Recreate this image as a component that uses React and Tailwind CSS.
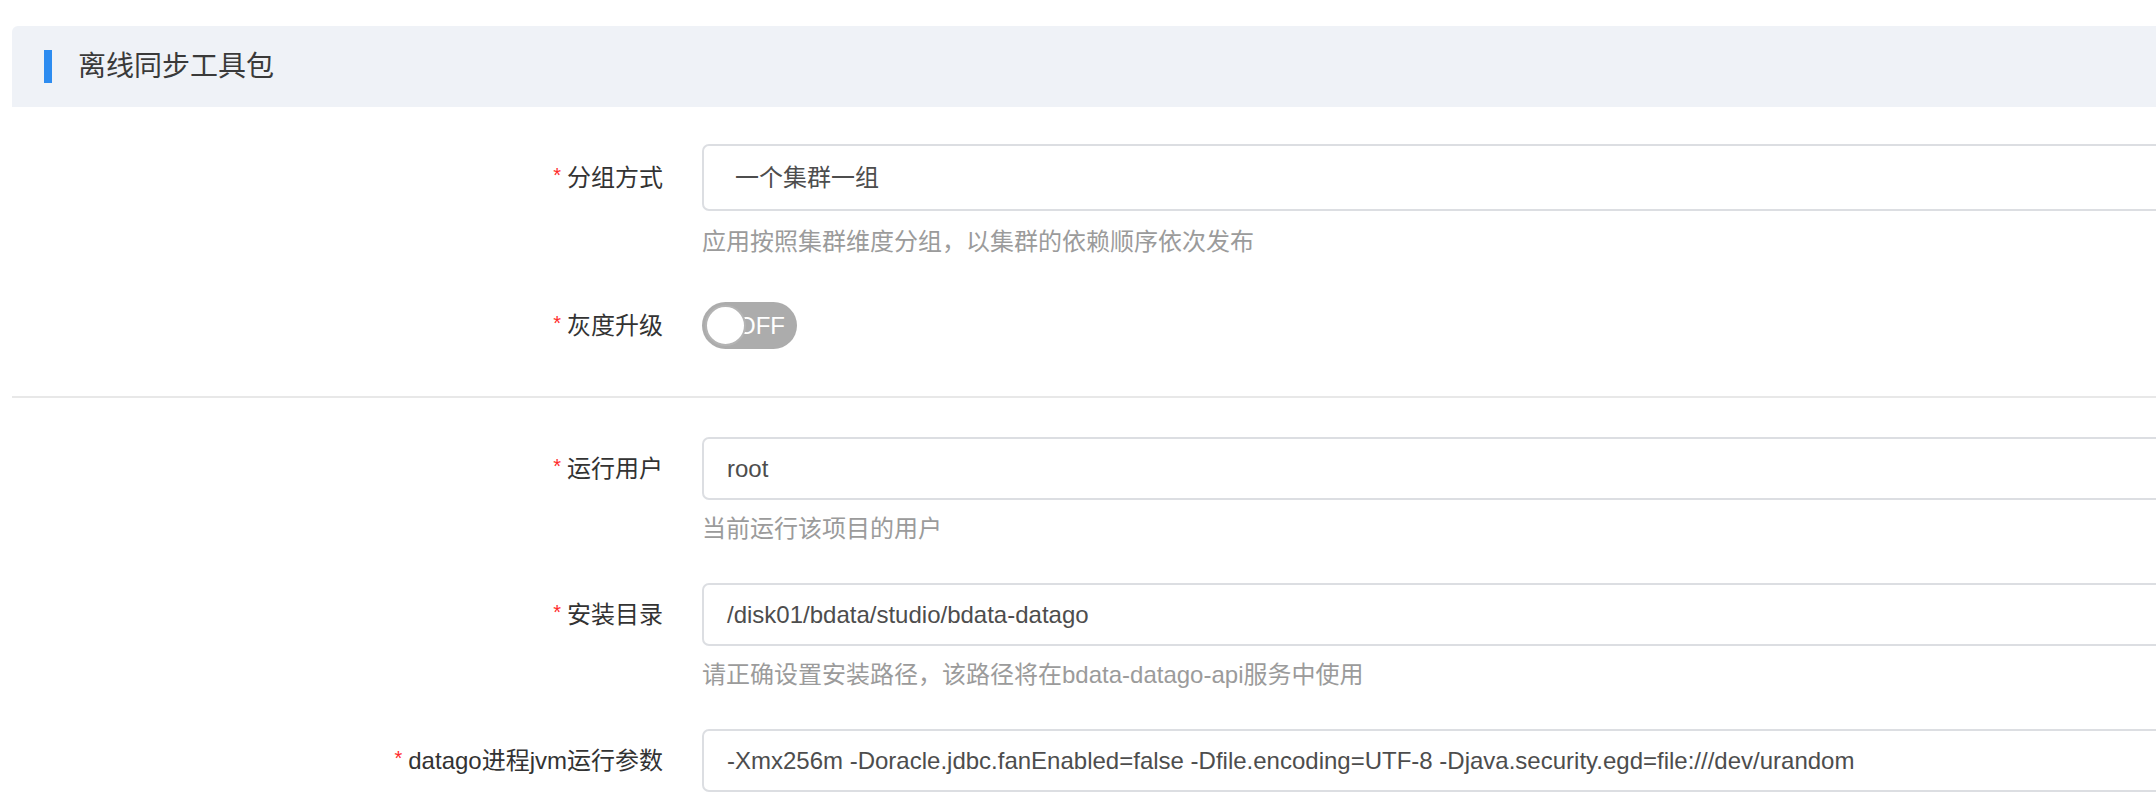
import React from "react";

const FONT = { fontFamily: '"Liberation Sans", "Noto Sans CJK SC", sans-serif' };

function Label({ text, h }) {
  return (
    <div className={`w-[690px] shrink-0 pr-[39px] flex items-center justify-end ${h}`}>
      <span className="text-[20px] leading-none text-[#ff2a2a] mr-[6px] -mt-[6px]">*</span>
      <span className="text-[24px] leading-none text-[#333333]">{text}</span>
    </div>
  );
}

function Help({ children, mt = "mt-[12px]" }) {
  return (
    <div className={`${mt} text-[24px] leading-[34px] text-[#9b9b9b] whitespace-nowrap`}>{children}</div>
  );
}

function TextInput({ value, h = "h-[63px]", pl = "pl-[23px]" }) {
  return (
    <div
      className={`w-[1600px] ${h} border-2 border-[#dcdee2] rounded-[7px] bg-white flex items-center ${pl} text-[24px] text-[#4d4d4d] whitespace-nowrap`}
    >
      {value}
    </div>
  );
}

export default function App() {
  return (
    <div className="w-[2156px] h-[812px] overflow-hidden bg-white" style={FONT}>
      <div className="ml-[12px] w-[2300px] pt-[26px]">
        {/* Section header */}
        <div className="h-[81px] bg-[#eff2f7] rounded-t-[6px] flex items-center pl-[32px]">
          <div className="w-[8px] h-[33px] bg-[#2d8cf0]" />
          <div className="ml-[26px] text-[28px] leading-none text-[#3a3a3a]">离线同步工具包</div>
        </div>

        {/* Group 1 */}
        <div className="mt-[37px]">
          <div className="flex items-start mb-[43px]">
            <Label text="分组方式" h="h-[67px]" />
            <div>
              <TextInput value="一个集群一组" h="h-[67px]" pl="pl-[31px]" />
              <Help mt="mt-[14px]">应用按照集群维度分组，以集群的依赖顺序依次发布</Help>
            </div>
          </div>

          <div className="flex items-start mb-[47px]">
            <Label text="灰度升级" h="h-[47px]" />
            <div className="relative w-[95px] h-[47px] rounded-full bg-[#acacac] flex items-center justify-end pr-[12px]">
              <span className="text-[24px] leading-none text-white">OFF</span>
              <div className="absolute left-[3px] top-[3px] w-[41px] h-[41px] rounded-full bg-white border-[2px] border-[#b4b4b4]" />
            </div>
          </div>
        </div>

        <div className="h-[2px] bg-[#e8e8e8]" />

        {/* Group 2 */}
        <div className="mt-[39px]">
          <div className="flex items-start mb-[37px]">
            <Label text="运行用户" h="h-[63px]" />
            <div>
              <TextInput value="root" />
              <Help>当前运行该项目的用户</Help>
            </div>
          </div>

          <div className="flex items-start mb-[37px]">
            <Label text="安装目录" h="h-[63px]" />
            <div>
              <TextInput value="/disk01/bdata/studio/bdata-datago" />
              <Help>请正确设置安装路径，该路径将在bdata-datago-api服务中使用</Help>
            </div>
          </div>

          <div className="flex items-start">
            <Label text="datago进程jvm运行参数" h="h-[63px]" />
            <div>
              <TextInput value="-Xmx256m -Doracle.jdbc.fanEnabled=false -Dfile.encoding=UTF-8 -Djava.security.egd=file:///dev/urandom" />
            </div>
          </div>
        </div>
      </div>
    </div>
  );
}
